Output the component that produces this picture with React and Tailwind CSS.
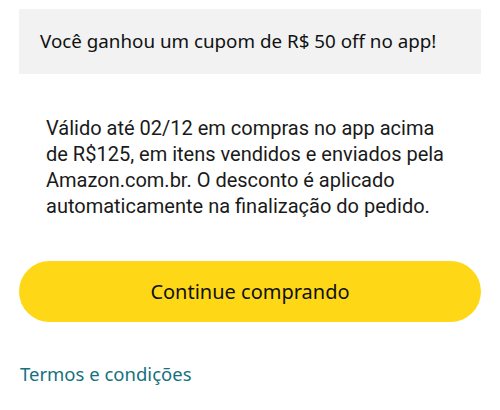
import React from 'react';

const App = () => {
  return (
    <div
      className="w-[500px] h-[410px] bg-white text-[#0f1111] overflow-hidden"
      style={{ fontFamily: '"Noto Sans", "Open Sans", sans-serif' }}
    >
      <div className="mx-[19px] mt-[9px] h-[65px] bg-[#f2f2f2] flex items-center pl-[21px]">
        <p className="text-[18.8px] leading-none">Você ganhou um cupom de R$ 50 off no app!</p>
      </div>

      <p
        className="mt-[41px] pl-[46px] pr-[50px] text-[20px] leading-[26px] text-[#1a1a1a]"
        style={{ fontFamily: 'Roboto, "Noto Sans", sans-serif' }}
      >
        Válido até 02/12 em compras no app acima de R$125, em itens vendidos e enviados pela
        Amazon.com.br. O desconto é aplicado automaticamente na finalização do pedido.
      </p>

      <button className="mt-[42px] mx-[19px] w-[462px] h-[61px] rounded-full bg-[#fed817] text-[20px] text-[#0f1111] flex items-center justify-center">
        Continue comprando
      </button>

      <a href="#" className="block mt-[38px] ml-[20px] text-[18.5px] text-[#15717f]">
        Termos e condições
      </a>
    </div>
  );
};

export default App;
